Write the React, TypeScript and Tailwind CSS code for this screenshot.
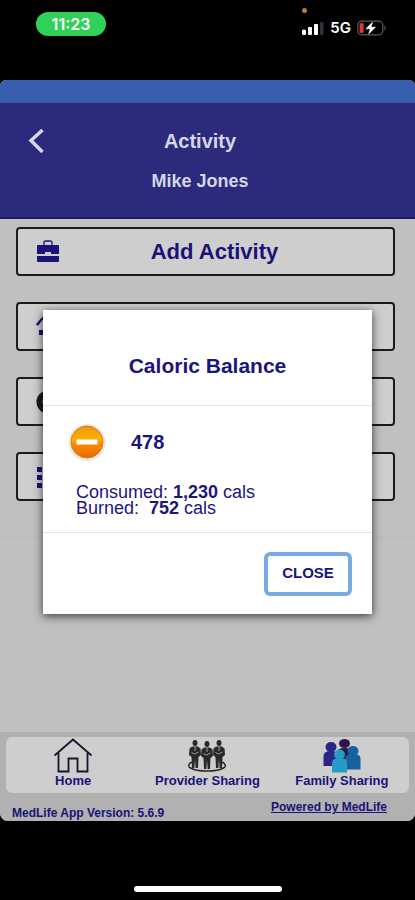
import type { ReactNode } from 'react';

function StatusBar() {
  return (
    <div className="flex h-20 shrink-0 items-start justify-between pl-9 pr-7">
      <div className="mt-3 flex h-6 w-[70px] items-center justify-center rounded-full bg-[#30d158] font-[Inter,sans-serif] text-base leading-5 font-semibold text-white">
        11:23
      </div>
      <div className="relative mt-5 flex h-4 items-center gap-1.5">
        <span className="absolute -top-3 left-0 size-[5px] rounded-full bg-[#c07a30]" />
        <svg className="h-4 w-[22px]" viewBox="0 0 22 16">
          <rect x="0" y="9.5" width="4" height="5.5" rx="1.5" fill="#fff" />
          <rect x="6" y="7" width="4" height="8" rx="1" fill="#fff" />
          <rect x="12" y="4" width="4" height="11" rx="1" fill="#fff" />
          <rect x="18" y="2" width="3.5" height="13" rx="1" fill="#333" />
        </svg>
        <span className="font-[Inter,sans-serif] text-[15px] leading-4 font-semibold text-white">5G</span>
        <svg className="h-4 w-[30px]" viewBox="0 0 30 16">
          <rect x="0.8" y="1.2" width="25" height="13.6" rx="4" fill="none" stroke="#5b5b5b" strokeWidth="1.2" />
          <path d="M27.5 5.5c1.6.6 1.6 4.4 0 5z" fill="#5b5b5b" />
          <rect x="2.6" y="3" width="4" height="10" rx="1.5" fill="#d73a3c" />
          <path d="M16.5 0.500 8 9.2h4.6L10.500 15.700l9-9h-4.800z" fill="#fff" stroke="#000" strokeWidth="0.5" />
        </svg>
      </div>
    </div>
  );
}

function Header() {
  return (
    <header>
      <div className="h-[23px] bg-[#375fae]" />
      <div className="grid h-[116px] grid-cols-[45px_1fr_45px] items-start border-b-2 border-[#1c1970] bg-[#2b2a7c] pr-[15px] pt-[22px] font-bold text-[#d6d6e8]">
        <button type="button" aria-label="Back" className="mt-0.5 flex h-7 justify-end">
          <svg className="h-7 w-[18px] shrink-0" viewBox="0 0 18 28" fill="none" stroke="currentColor" strokeWidth="3.5">
            <path d="M15.500 3 4 13.500 15.500 25" />
          </svg>
        </button>
        <div className="text-center">
          <h1 className="text-xl leading-8">Activity</h1>
          <p className="mt-2 text-lg leading-8">Mike Jones</p>
        </div>
      </div>
    </header>
  );
}

function MenuButton({ label, icon, children }: { label: string; icon: ReactNode; children?: ReactNode }) {
  return (
    <button
      type="button"
      aria-label={label}
      className="flex h-[49px] w-full items-center rounded-sm border-2 border-[#1b1b1b] bg-[#cecece] pl-[18px] pr-6 text-[22px] font-bold text-[#1a1278]"
    >
      {icon}
      <span className="flex-1 text-center">{children}</span>
    </button>
  );
}

function Dialog() {
  return (
    <div
      role="dialog"
      aria-labelledby="dialog-title"
      className="absolute inset-x-[43px] top-[230px] bg-white text-[#1a1580] shadow-[0_2px_9px_rgba(0,0,0,0.7)]"
    >
      <h2 id="dialog-title" className="flex h-24 items-center justify-center border-b border-[#e5e5e5] pt-4 text-[21px] font-bold">
        Caloric Balance
      </h2>
      <div className="h-[127px] border-b border-[#e5e5e5] px-6 pt-4">
        <div className="flex items-center gap-6">
          <svg className="size-10" viewBox="0 0 40 40">
            <defs>
              <linearGradient id="ball" x1="0" y1="0" x2="0" y2="1">
                <stop offset="0" stopColor="#ee9418" />
                <stop offset="0.4" stopColor="#ffb000" />
                <stop offset="0.6" stopColor="#fb8a00" />
                <stop offset="1" stopColor="#e26b00" />
              </linearGradient>
            </defs>
            <circle cx="20" cy="20.5" r="18.5" fill="#e3e3e3" />
            <circle cx="20" cy="20" r="17.5" fill="#f4f0ea" />
            <circle cx="20" cy="20" r="16" fill="url(#ball)" stroke="#d77713" />
            <rect x="9.5" y="17.5" width="21" height="5" rx="0.5" fill="#fff" />
          </svg>
          <strong className="text-xl">478</strong>
        </div>
        <div className="mt-[22px] pl-[9px] text-lg leading-4">
          <p>
            Consumed: <strong>1,230</strong> cals
          </p>
          <p>
            Burned:&nbsp; <strong>752</strong> cals
          </p>
        </div>
      </div>
      <div className="flex h-[81px] items-center justify-end pr-5">
        <button type="button" className="h-11 w-[88px] rounded-md border-4 border-[#77ace2] text-[15px] font-bold">
          CLOSE
        </button>
      </div>
    </div>
  );
}

function Person({ x, y }: { x: number; y: number }) {
  return (
    <g transform={`translate(${x} ${y})`}>
      <ellipse cx="6" cy="3" rx="2.5" ry="3" />
      <path d="M3 6.500h6l2.500 2 .5 6.500-2.500 2-.5 11H6.600L6 19l-.6 9H3l-.5-11L0 15l.5-6.500z" />
      <path d="M6 7v4M2.500 12.500l3 1.500 4-2" fill="none" stroke="#b5b5b5" strokeWidth="0.8" />
    </g>
  );
}

function BottomNav() {
  return (
    <nav className="mx-1.5 grid h-14 grid-cols-3 rounded-md bg-[#cecece] text-[13px] leading-4 font-bold text-[#1a1278]">
      <a href="#home" className="flex flex-col items-center">
        <svg className="h-9 w-10" viewBox="0 0 40 36" fill="none" stroke="#16162e" strokeWidth="1.8">
          <path d="M1.500 18.5 20 2.5l18.500 16M5.5 16v18.5h10v-13h9v13h10V16" />
        </svg>
        Home
      </a>
      <a href="#provider" className="flex flex-col items-center whitespace-nowrap">
        <svg className="h-9 w-10" viewBox="0 0 40 36" fill="#292929">
          <path d="M5 25C-3 29 4 34 20 34s23-5 15-9" fill="none" stroke="#292929" strokeWidth="1.5" />
          <Person x={2} y={3} />
          <Person x={26} y={3} />
          <Person x={14} y={4} />
        </svg>
        Provider Sharing
      </a>
      <a href="#family" className="flex flex-col items-center whitespace-nowrap">
        <svg className="h-9 w-10" viewBox="0 0 40 36">
          <g fill="#2b1647">
            <ellipse cx="22.500" cy="6.500" rx="5.500" ry="4.5" />
            <path d="M15 22v-6q0-5 7.500-5t7.500 5v6z" />
          </g>
          <g fill="#292587">
            <ellipse cx="9" cy="10" rx="5.500" ry="5" />
            <path d="M1.500 29V19q0-5 7.500-5t7.500 5v10z" />
          </g>
          <g fill="#17629e">
            <ellipse cx="31" cy="14" rx="5.500" ry="5" />
            <path d="M23 32.500V22q0-5 8-5t7.500 5v10.500z" />
          </g>
          <g fill="#269bc4">
            <ellipse cx="17.500" cy="17.500" rx="5.500" ry="5" />
            <path d="M10 35.500V26q0-5 7.500-5t7.500 5v9.500z" />
          </g>
        </svg>
        Family Sharing
      </a>
    </nav>
  );
}

export default function App() {
  return (
    <div className="flex min-h-screen flex-col bg-black font-['Liberation_Sans',Arial,sans-serif]">
      <StatusBar />
      <div className="relative flex flex-1 flex-col overflow-hidden rounded-t-md rounded-b-lg bg-[#c0c0c0]">
        <Header />
        <main className="flex flex-1 flex-col">
          <div className="flex flex-col gap-[26px] border-b border-[#bababa] pt-2 pr-5 pb-9 pl-4">
            <MenuButton
              label="Add Activity"
              icon={
                <svg className="size-6" viewBox="0 0 24 24" fill="currentColor">
                  <path d="M2 5h20q1 0 1 1v8h-8v-2H9v2H1V6q0-1 1-1zM1 16h22v5q0 1-1 1H2q-1 0-1-1z" />
                  <path d="M8 5V2.5Q8 1 10 1h4q2 0 2 1.500V5" fill="none" stroke="currentColor" strokeWidth="1.300" />
                </svg>
              }
            >
              Add Activity
            </MenuButton>
            <MenuButton
              label="Activity summary"
              icon={
                <svg className="size-6" viewBox="0 0 24 24" fill="currentColor">
                  <path d="M1 10Q4 5 10 1" fill="none" stroke="currentColor" strokeWidth="2.5" />
                  <path d="M3 15h8v5H3z" />
                </svg>
              }
            />
            <MenuButton
              label="Caloric Balance"
              icon={
                <svg className="size-6" viewBox="0 0 24 24">
                  <circle cx="12" cy="12" r="8.500" fill="none" stroke="#1b1b1b" strokeWidth="6" />
                </svg>
              }
            />
            <MenuButton
              label="Activity list"
              icon={
                <svg className="size-6" viewBox="0 0 24 24" fill="currentColor">
                  <path d="M1 2h5v5H1zM1 10h5v5H1zM1 18h5v5H1zM8 2h15v5H8zM8 10h15v5H8zM8 18h15v5H8z" />
                </svg>
              }
            />
          </div>
        </main>
        <footer className="bg-[#b1b1b1] pt-[5px]">
          <BottomNav />
          <div className="flex h-7 items-start justify-between pl-3 pr-7 text-xs leading-4 font-bold text-[#1a1278]">
            <span className="mt-3">MedLife App Version: 5.6.9</span>
            <a href="#medlife" className="mt-1.5 underline">
              Powered by MedLife
            </a>
          </div>
        </footer>
        <Dialog />
      </div>
      <div className="flex h-[79px] shrink-0 items-end justify-center pb-2">
        <div className="h-1.5 w-[148px] rounded-full bg-white" />
      </div>
    </div>
  );
}
